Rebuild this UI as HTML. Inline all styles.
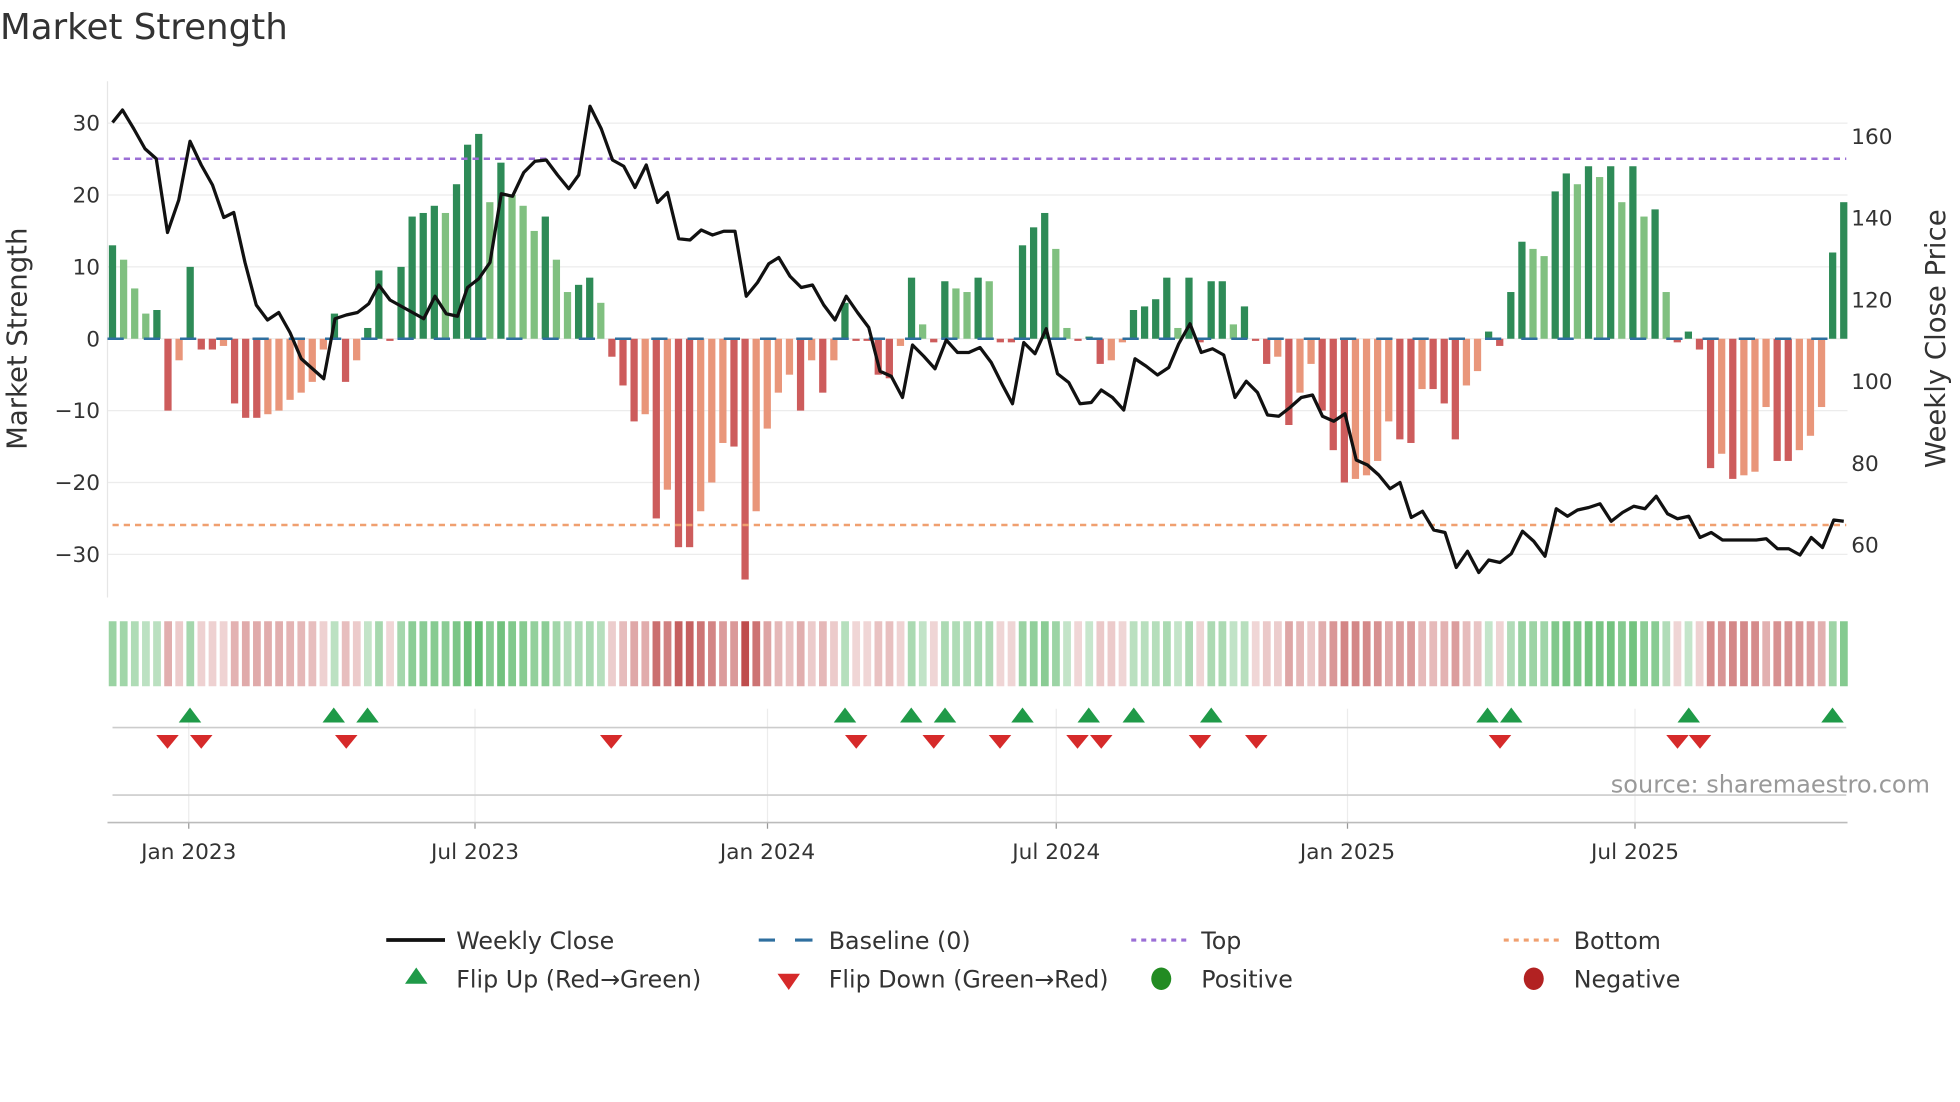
<!DOCTYPE html>
<html><head><meta charset="utf-8"><style>
html,body{margin:0;padding:0;background:#fff;}
svg{display:block;font-family:"DejaVu Sans","Liberation Sans",sans-serif;}
</style></head><body>
<svg id="s" width="1960" height="1102" viewBox="0 0 1568 881.6" xmlns="http://www.w3.org/2000/svg">
<rect width="1568" height="882" fill="#fff"/>
<text x="0" y="31" font-size="28.5" fill="#333">Market Strength</text>
<g id="grid"></g>
<g id="bars"></g>
<g id="strip"></g>
<g id="lower"></g>
<g id="line"></g>
<g id="axes" font-size="17.3" fill="#333"></g>
<text x="1544" y="634" font-size="19.2" fill="#999" text-anchor="end">source: sharemaestro.com</text>
<text transform="translate(21,271) rotate(-90)" font-size="22" fill="#333" text-anchor="middle">Market Strength</text>
<text transform="translate(1556,271) rotate(-90)" font-size="22" fill="#333" text-anchor="middle">Weekly Close Price</text>
<g font-size="19" fill="#333">
<line x1="309" y1="752" x2="356" y2="752" stroke="#111" stroke-width="3"/>
<text x="365" y="759">Weekly Close</text>
<line x1="607" y1="752" x2="620" y2="752" stroke="#2f6f9f" stroke-width="2.5"/><line x1="636" y1="752" x2="650" y2="752" stroke="#2f6f9f" stroke-width="2.5"/>
<text x="663" y="759">Baseline (0)</text>
<line x1="905" y1="752" x2="950" y2="752" stroke="#9b6fd6" stroke-width="2.5" stroke-dasharray="4,4"/>
<text x="961" y="759">Top</text>
<line x1="1203" y1="752" x2="1248" y2="752" stroke="#f0a070" stroke-width="2.5" stroke-dasharray="4,4"/>
<text x="1259" y="759">Bottom</text>
<polygon points="333,774 324,787 342,787" fill="#1f9a48"/>
<text x="365" y="790">Flip Up (Red→Green)</text>
<polygon points="622,779 640,779 631,792" fill="#d62a2a"/>
<text x="663" y="790">Flip Down (Green→Red)</text>
<ellipse cx="929" cy="783" rx="8" ry="9" fill="#228b22"/>
<text x="961" y="790">Positive</text>
<ellipse cx="1227" cy="783" rx="8" ry="9" fill="#b22222"/>
<text x="1259" y="790">Negative</text>
</g>
</svg>
<script>
var NS="http://www.w3.org/2000/svg";
function el(p,t,a){var e=document.createElementNS(NS,t);for(var k in a)e.setAttribute(k,a[k]);document.getElementById(p).appendChild(e);return e;}
var v=[13,11,7,3.5,4,-10,-3,10,-1.5,-1.5,-1,-9,-11,-11,-10.5,-10,-8.5,-7.5,-6,-1.5,3.5,-6,-3,1.5,9.5,-0.3,10,17,17.5,18.5,17.5,21.5,27,28.5,19,24.5,20,18.5,15,17,11,6.5,7.5,8.5,5,-2.5,-6.5,-11.5,-10.5,-25,-21,-29,-29,-24,-20,-14.5,-15,-33.5,-24,-12.5,-7.5,-5,-10,-3,-7.5,-3,5,-0.3,-0.3,-5,-5.5,-1,8.5,2,-0.5,8,7,6.5,8.5,8,-0.5,-0.5,13,15.5,17.5,12.5,1.5,-0.3,0.3,-3.5,-3,-0.5,4,4.5,5.5,8.5,1.5,8.5,-0.5,8,8,2,4.5,-0.3,-3.5,-2.5,-12,-7.5,-3.5,-10,-15.5,-20,-19.5,-19,-17,-11.5,-14,-14.5,-7,-7,-9,-14,-6.5,-4.5,1,-1,6.5,13.5,12.5,11.5,20.5,23,21.5,24,22.5,24,19,24,17,18,6.5,-0.5,1,-1.5,-18,-16,-19.5,-19,-18.5,-9.5,-17,-17,-15.5,-13.5,-9.5,12,19];
var n=v.length,x0=90,x1=1475,dx=(x1-x0)/(n-1),y0=271,k=5.75;
[30,20,10,0,-10,-20,-30].forEach(function(t){var y=y0-t*k;el("grid","line",{x1:86,x2:1478,y1:y,y2:y,stroke:"#ececec","stroke-width":1});
 var tx=el("axes","text",{x:80,y:y+6,"text-anchor":"end"});tx.textContent=(t<0?"−"+(-t):t);});
[160,140,120,100,80,60].forEach(function(p){var y=436-(p-60)*3.27;var tx=el("axes","text",{x:1481,y:y+6});tx.textContent=p;});
el("grid","line",{x1:86,x2:86,y1:65,y2:478,stroke:"#e6e6e6","stroke-width":1});
for(var i=0;i<n;i++){var x=x0+i*dx,a=v[i],pa=i?v[i-1]:0,dark=Math.abs(a)>=Math.abs(pa)||(a*pa<0);
 var c=a>=0?(dark?"#2e8b57":"#80c080"):(dark?"#cd5c5c":"#e9967a");
 var h=Math.abs(a)*k;el("bars","rect",{x:x-2.9,y:a>=0?y0-h:y0,width:5.8,height:Math.max(h,0.8),fill:c});
 var t=Math.min(Math.abs(a)/34,1),col;
 if(a>=0){col="rgb("+Math.round(200-t*120)+","+Math.round(230-t*50)+","+Math.round(205-t*110)+")";}
 else{col="rgb("+Math.round(240-t*50)+","+Math.round(215-t*140)+","+Math.round(215-t*140)+")";}
 el("strip","rect",{x:x-3,y:497,width:6.2,height:52,fill:col});}
el("bars","line",{x1:86,x2:1478,y1:y0,y2:y0,stroke:"#2f6f9f","stroke-width":2,"stroke-dasharray":"13,16"});
el("bars","line",{x1:90,x2:1477,y1:127,y2:127,stroke:"#9b6fd6","stroke-width":2,"stroke-dasharray":"5,4"});
el("bars","line",{x1:90,x2:1477,y1:420,y2:420,stroke:"#f0a070","stroke-width":2,"stroke-dasharray":"5,4"});
var P=[90,98,98,88,107,103,116,119,125,127,134,186,143,160,152,113,161,132,170,148,179,174,187,170,196,210,205,244,214,256,223,250,232,266,241,287,250,295,259,303,268,255,277,252,286,250,295,243,303,228,312,240,321,245,330,250,339,255,348,237,357,251,366,253,374,230,383,223,392,210,401,155,410,157,419,138,428,129,437,128,446,140,455,151,463,140,472,85,481,103,490,128,499,133,508,150,517,132,526,162,534,154,543,191,552,192,561,184,570,188,579,185,588,185,597,237,606,226,615,211,623,206,632,221,641,230,650,228,659,244,668,256,677,237,686,250,695,262,704,297,713,301,722,318,730,276,739,285,748,295,757,272,766,282,775,282,784,278,793,290,802,308,810,323,819,274,828,283,837,263,846,299,855,306,864,323,873,322,881,312,890,318,899,328,908,287,917,293,926,300,935,294,943,275,952,259,961,282,970,279,979,284,988,318,997,305,1006,314,1014,332,1023,333,1032,326,1041,318,1050,316,1058,333,1067,337,1076,331,1085,368,1094,372,1103,380,1112,391,1120,386,1129,414,1138,409,1147,424,1156,426,1165,454,1174,441,1183,458,1191,448,1200,450,1209,443,1218,425,1227,433,1236,445,1245,407,1254,413,1262,408,1271,406,1280,403,1289,417,1298,410,1307,405,1316,407,1325,397,1334,411,1342,415,1351,413,1360,430,1369,426,1378,432,1387,432,1396,432,1405,432,1413,431,1422,439,1431,439,1440,444,1449,430,1458,438,1467,416,1475,417];
var pts=[];for(var j=0;j<P.length;j+=2)pts.push(P[j]+","+P[j+1]);
el("line","polyline",{points:pts.join(" "),fill:"none",stroke:"#111","stroke-width":2.6,"stroke-linejoin":"round"});
[151,380,614,845,1078,1308].forEach(function(x,i){el("lower","line",{x1:x,x2:x,y1:567,y2:658,stroke:"#ececec","stroke-width":1});
 el("lower","line",{x1:x,x2:x,y1:658,y2:663,stroke:"#999","stroke-width":1});
 var t=el("axes","text",{x:x,y:687,"text-anchor":"middle"});t.textContent=["Jan 2023","Jul 2023","Jan 2024","Jul 2024","Jan 2025","Jul 2025"][i];});
el("lower","line",{x1:90,x2:1477,y1:582,y2:582,stroke:"#ccc","stroke-width":1.3});
el("lower","line",{x1:90,x2:1477,y1:636,y2:636,stroke:"#ccc","stroke-width":1.3});
el("lower","line",{x1:86,x2:1478,y1:658,y2:658,stroke:"#bbb","stroke-width":1.3});
[152,267,294,676,729,756,818,871,907,969,1190,1209,1351,1466].forEach(function(x){el("lower","polygon",{points:(x)+",566 "+(x-9)+",578 "+(x+9)+",578",fill:"#1f9a48"});});
[134,161,277,489,685,747,800,862,881,960,1005,1200,1342,1360].forEach(function(x){el("lower","polygon",{points:(x-9)+",588 "+(x+9)+",588 "+x+",599",fill:"#d62a2a"});});
</script>
</body></html>
